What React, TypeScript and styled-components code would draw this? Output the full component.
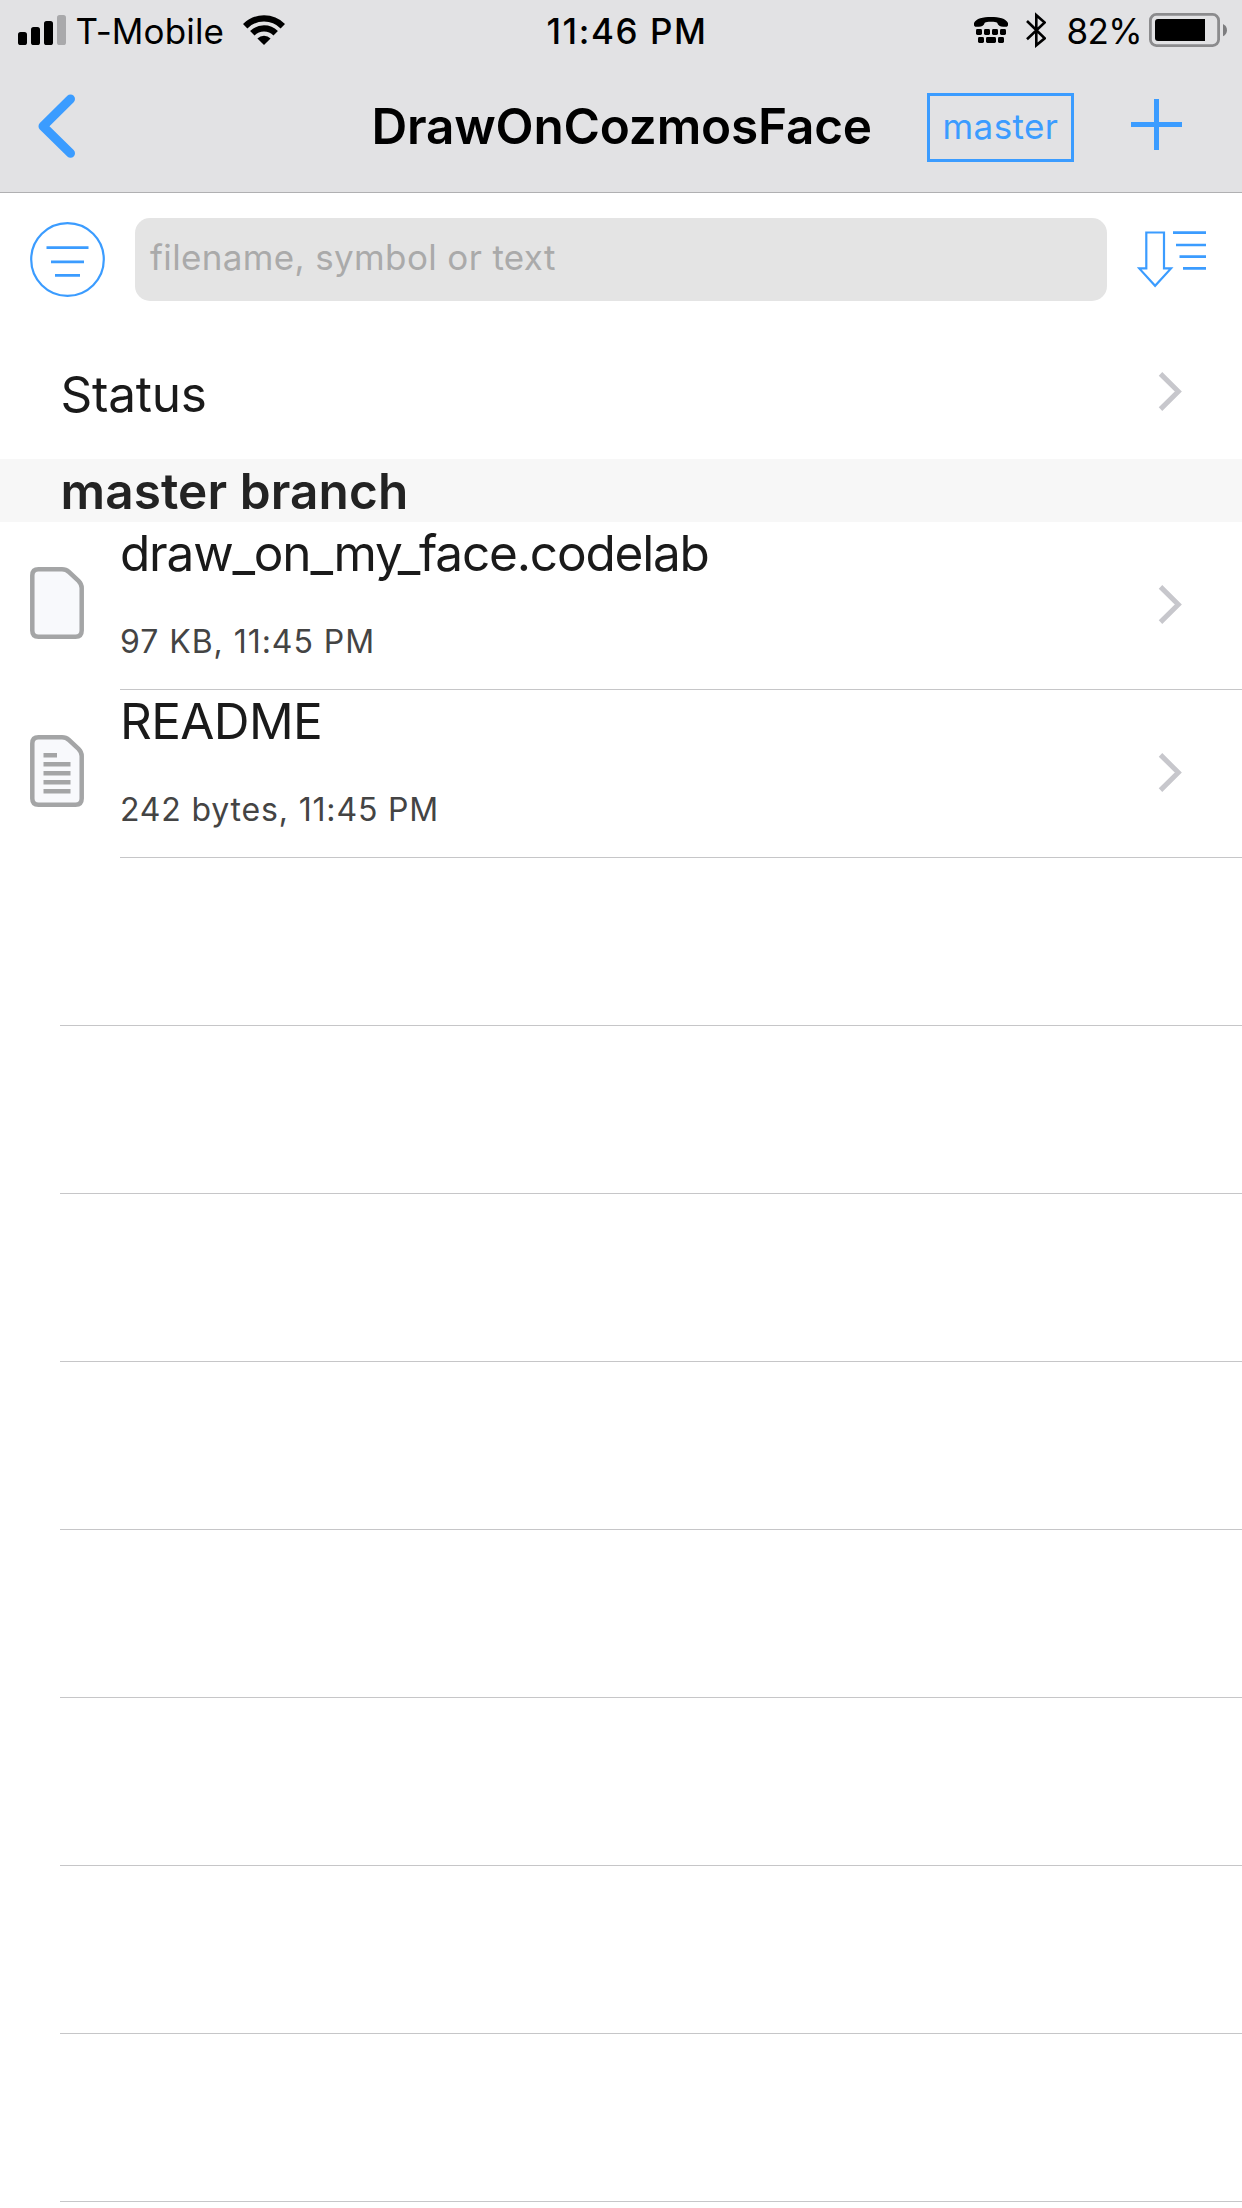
import React from "react";
import styled, { createGlobalStyle } from "styled-components";

const BLUE = "#3b9cff";
const LINE = "#c6c6c8";

const GlobalStyle = createGlobalStyle`
  * { box-sizing: border-box; }
  body {
    margin: 0;
    background: #fff;
    color: #1a1a1a;
    font-family: Inter, "Liberation Sans", sans-serif;
    overflow: hidden;
  }
  svg { display: block; flex: none; }
`;

const Screen = styled.div`
  width: 1242px;
  height: 2208px;
  overflow: hidden;
  background: #fff;
`;

const Header = styled.header`
  height: 193px;
  background: #e2e2e4;
  border-bottom: 1px solid #b0b0b2;
  color: #000;
`;

const StatusBar = styled.div`
  display: grid;
  grid-template-columns: 546.5px auto 1fr;
  height: 62px;
  font-size: 35px;
  line-height: 62px;
  white-space: nowrap;
  svg { margin-bottom: 2px; }
`;

const Carrier = styled.div`
  display: flex;
  align-items: center;
  padding-left: 18px;
`;

const CarrierName = styled.span`
  margin: 0 18.5px 0 9.5px;
  letter-spacing: 0.13px;
`;

const Clock = styled.span`
  font-weight: 550;
  letter-spacing: 1.58px;
`;

const Indicators = styled.div`
  display: flex;
  align-items: center;
  justify-content: flex-end;
  padding-right: 15px;
`;

const Percent = styled.span`
  margin: 0 7px 0 20.5px;
  letter-spacing: -0.65px;
`;

const NavBar = styled.nav`
  display: flex;
  align-items: center;
  height: 130px;
  padding: 0 60px 2px 38px;
`;

const IconButton = styled.button<{ $lift?: number }>`
  flex: none;
  padding: 0;
  border: 0;
  background: none;
  margin-bottom: ${(p) => p.$lift ?? 0}px;
`;

const Title = styled.h1`
  flex: 1;
  margin: 0 0 0 295.5px;
  font-size: 49.5px;
  font-weight: 600;
  line-height: 60px;
  letter-spacing: -0.2px;
  white-space: nowrap;
`;

const BranchButton = styled.button`
  width: 147px;
  height: 69px;
  margin: 3px 57px 0 0;
  padding: 0 0 3px;
  border: 3px solid ${BLUE};
  background: none;
  color: ${BLUE};
  font: 400 35px/42px Inter, "Liberation Sans", sans-serif;
  letter-spacing: 0.4px;
`;

const SearchBar = styled.div`
  display: flex;
  align-items: center;
  gap: 30px;
  height: 132px;
  margin-bottom: 2px;
  padding: 0 36px 0 30px;
`;

const SearchField = styled.div`
  display: flex;
  align-items: center;
  flex: 1;
  height: 83px;
  margin-top: 1px;
  padding: 0 15px 6px;
  border-radius: 15px;
  background: #e4e4e4;
  color: #aaa;
  font-size: 35px;
  letter-spacing: 0.36px;
`;

const StatusRow = styled.div`
  display: flex;
  align-items: center;
  justify-content: space-between;
  height: 132px;
  padding: 0 59px 0 60.5px;
`;

const RowLabel = styled.span`
  padding-top: 2px;
  font-size: 49.5px;
  letter-spacing: -0.23px;
`;

const SectionHeader = styled.h2`
  height: 63px;
  margin: 0;
  padding-left: 60.5px;
  background: #f7f7f7;
  color: #232323;
  font-size: 49.5px;
  font-weight: 600;
  line-height: 64px;
  letter-spacing: 0.1px;
`;

const FileRow = styled.div`
  display: flex;
  align-items: center;
  gap: 36px;
  height: 168px;
  padding-left: 30px;
  > svg { margin-bottom: 6px; }
`;

const FileBody = styled.div`
  display: flex;
  flex: 1;
  align-items: center;
  justify-content: space-between;
  height: 168px;
  padding-right: 59px;
  border-bottom: 1px solid ${LINE};
`;

const FileText = styled.div`
  align-self: flex-start;
`;

const FileName = styled.div<{ $tracking: number }>`
  font-size: 49.5px;
  line-height: 62px;
  letter-spacing: ${(p) => p.$tracking}px;
`;

const FileMeta = styled.div<{ $tracking: number }>`
  margin-top: 34px;
  color: #444;
  font-size: 32px;
  line-height: 47px;
  letter-spacing: ${(p) => p.$tracking}px;
`;

const EmptyRow = styled.div`
  height: 168px;
  margin-left: 60px;
  border-bottom: 1px solid ${LINE};
`;

const ChevronSvg = styled.svg<{ $lift: number }>`
  margin-bottom: ${(p) => p.$lift}px;
`;

const Chevron = ({ lift }: { lift: number }) => (
  <ChevronSvg $lift={lift} width="25" height="41" viewBox="0 0 25 41" fill="none">
    <path d="M2.5 2.9 20.3 20.5 2.5 38.1" stroke="#c7c7cc" strokeWidth="5" />
  </ChevronSvg>
);

const Signal = () => (
  <svg width="48" height="30" viewBox="0 0 48 30">
    <rect x="0" y="17" width="9" height="13" rx="2.6" />
    <rect x="13" y="12" width="9" height="18" rx="2.6" />
    <rect x="26" y="6" width="9" height="24" rx="2.6" />
    <rect x="39" y="0" width="9" height="30" rx="2.6" fill="#a9a9ab" />
  </svg>
);

const Wifi = () => (
  <svg width="42" height="30" viewBox="0 0 42 30" fill="none" stroke="#000" strokeWidth="6.2">
    <path d="M2.2 11.2A26.6 26.6 0 0 1 39.8 11.2" />
    <path d="M9.3 18.3A16.5 16.5 0 0 1 32.7 18.3" />
    <path d="M21 30 14.4 23.4A9.3 9.3 0 0 1 27.6 23.4Z" fill="#000" stroke="none" />
  </svg>
);

const TtyIcon = styled.svg`
  margin-right: 18px;
`;

const Tty = () => (
  <TtyIcon width="34" height="26" viewBox="0 0 34 26">
    <path d="M0 6C2 1.5 9 0 17 0s15 1.5 17 6v2c0 1-1 1.8-2 1.8-4 0-6.5-.5-8-2.4-1-1.7 0-2.6-7-2.6s-6 .9-7 2.6C8.5 9.3 6 9.8 2 9.8 1 9.8 0 9 0 8z" />
    {[2, 10, 18, 26].map((x) => (
      <rect key={x} x={x} y="12" width="6" height="6" rx="1.4" />
    ))}
    <rect x="4" y="20" width="6" height="6" rx="1.4" />
    <rect x="12" y="20" width="10" height="6" rx="1.4" />
    <rect x="24" y="20" width="6" height="6" rx="1.4" />
  </TtyIcon>
);

const Bluetooth = () => (
  <svg width="20" height="36" viewBox="0 0 20 36" fill="none" stroke="#000" strokeWidth="2.6">
    <path d="M1 9 18.7 26.3 10.3 33.3V3.2L18.7 10.5 1 27.2" />
  </svg>
);

const Battery = () => (
  <svg width="78" height="34" viewBox="0 0 78 34">
    <rect x="1.4" y="1.4" width="68.2" height="31.2" rx="6" fill="none" stroke="#8b8b8d" strokeWidth="2.8" />
    <path d="M9 6h47v22H9a3 3 0 0 1-3-3V9a3 3 0 0 1 3-3Z" />
    <path d="M74 11c5.3 2.5 5.3 9.8 0 12.3Z" fill="#7d7d7f" />
  </svg>
);

const DocumentIcon = ({ lines }: { lines: boolean }) => (
  <svg width="54" height="72" viewBox="0 0 54 72">
    <path
      d="M8.5 2.3H32Q36 2.3 39 5L48.5 13.8Q51.7 17 51.7 21V63.5Q51.7 69.7 45.5 69.7H8.5Q2.3 69.7 2.3 63.5V8.5Q2.3 2.3 8.5 2.3Z"
      fill="#f8f9fc"
      stroke="#a4a5a6"
      strokeWidth="4.5"
    />
    {lines &&
      [18, 27, 36, 45, 54].map((y, i) => (
        <rect key={y} x="13.5" y={y} width={i === 0 ? 13.5 : 27} height="4.5" fill="#a4a5a6" />
      ))}
  </svg>
);

const files = [
  { name: "draw_on_my_face.codelab", meta: "97 KB, 11:45 PM", lines: false, tracking: -1.19, metaTracking: 0.96 },
  { name: "README", meta: "242 bytes, 11:45 PM", lines: true, tracking: -0.64, metaTracking: 0.83 },
];

export default function App() {
  return (
    <Screen>
      <GlobalStyle />
      <Header>
        <StatusBar>
          <Carrier>
            <Signal />
            <CarrierName>T-Mobile</CarrierName>
            <Wifi />
          </Carrier>
          <Clock>11:46 PM</Clock>
          <Indicators>
            <Tty />
            <Bluetooth />
            <Percent>82%</Percent>
            <Battery />
          </Indicators>
        </StatusBar>
        <NavBar>
          <IconButton aria-label="Back">
            <svg width="38" height="64" viewBox="0 0 38 64" fill="none">
              <path d="M32.5 5 5 32.3 32.5 59.3" stroke={BLUE} strokeWidth="9" strokeLinecap="round" strokeLinejoin="round" />
            </svg>
          </IconButton>
          <Title>DrawOnCozmosFace</Title>
          <BranchButton>master</BranchButton>
          <IconButton aria-label="Add" $lift={3}>
            <svg width="51" height="51" viewBox="0 0 51 51" fill="none">
              <path d="M25.5 0V51M0 25.5H51" stroke={BLUE} strokeWidth="5" />
            </svg>
          </IconButton>
        </NavBar>
      </Header>

      <SearchBar>
        <IconButton aria-label="Filter">
          <svg width="75" height="75" viewBox="0 0 75 75" fill="none" stroke={BLUE}>
            <circle cx="37.5" cy="37.5" r="36.3" strokeWidth="2.2" />
            <path d="M16.5 25.7H58.5M21 39.9H54M25 53.4H50" strokeWidth="2.8" />
          </svg>
        </IconButton>
        <SearchField>filename, symbol or text</SearchField>
        <IconButton aria-label="Sort">
          <svg width="69" height="57" viewBox="0 0 69 57" fill="none" stroke={BLUE}>
            <path d="M9.3 1.5H27V37.4H34L18.1 54.8 2.2 37.4H9.3Z" strokeWidth="2.2" />
            <path d="M36 1.6H69M39 14H69M42.5 25.7H69M46 37.4H69" strokeWidth="2.7" />
          </svg>
        </IconButton>
      </SearchBar>

      <StatusRow>
        <RowLabel>Status</RowLabel>
        <Chevron lift={3} />
      </StatusRow>

      <SectionHeader>master branch</SectionHeader>
      {files.map((file) => (
        <FileRow key={file.name}>
          <DocumentIcon lines={file.lines} />
          <FileBody>
            <FileText>
              <FileName $tracking={file.tracking}>{file.name}</FileName>
              <FileMeta $tracking={file.metaTracking}>{file.meta}</FileMeta>
            </FileText>
            <Chevron lift={2} />
          </FileBody>
        </FileRow>
      ))}
      {Array.from({ length: 8 }, (_, i) => (
        <EmptyRow key={i} />
      ))}
    </Screen>
  );
}
